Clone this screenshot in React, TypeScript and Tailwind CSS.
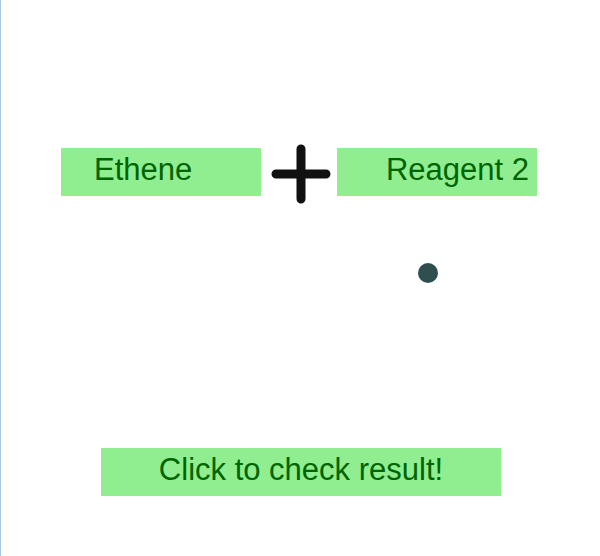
export default function App() {
  return (
    <div className="relative w-[600px] h-[556px] bg-white font-['Liberation_Sans',Arial,sans-serif] overflow-hidden">
      {/* left frame edge */}
      <div className="absolute left-0 top-0 bottom-0 w-px bg-[#a9c6ea]" />

      <div className="flex flex-col pt-[148px]">
        {/* Reaction row */}
        <div className="flex items-start pl-[61px]">
          <div className="w-[200px] h-[48px] bg-[#90ee90] text-[#006400] text-[31px] leading-none flex items-center pl-[33px] pb-[6px]">
            Ethene
          </div>
          <svg width="60" height="60" viewBox="0 0 60 60" className="ml-[10px] mr-[6px] -mt-[4px]">
            <path d="M5 30 H55 M30 5 V55" stroke="#111" strokeWidth="9" strokeLinecap="round" fill="none" />
          </svg>
          <div className="w-[200px] h-[48px] bg-[#90ee90] text-[#006400] text-[31px] leading-none flex items-center justify-end pr-[8px] pb-[6px]">
            Reagent 2
          </div>
        </div>

        {/* product slot */}
        <div className="ml-[418px] mt-[59px] w-[20px] h-[20px] rounded-full bg-[#2f4f4f]" />

        {/* check button */}
        <div className="ml-[101px] mt-[165px] w-[400px] h-[48px] bg-[#90ee90] text-[#006400] text-[31px] leading-none flex items-center justify-center pb-[6px]">
          Click to check result!
        </div>
      </div>
    </div>
  )
}
